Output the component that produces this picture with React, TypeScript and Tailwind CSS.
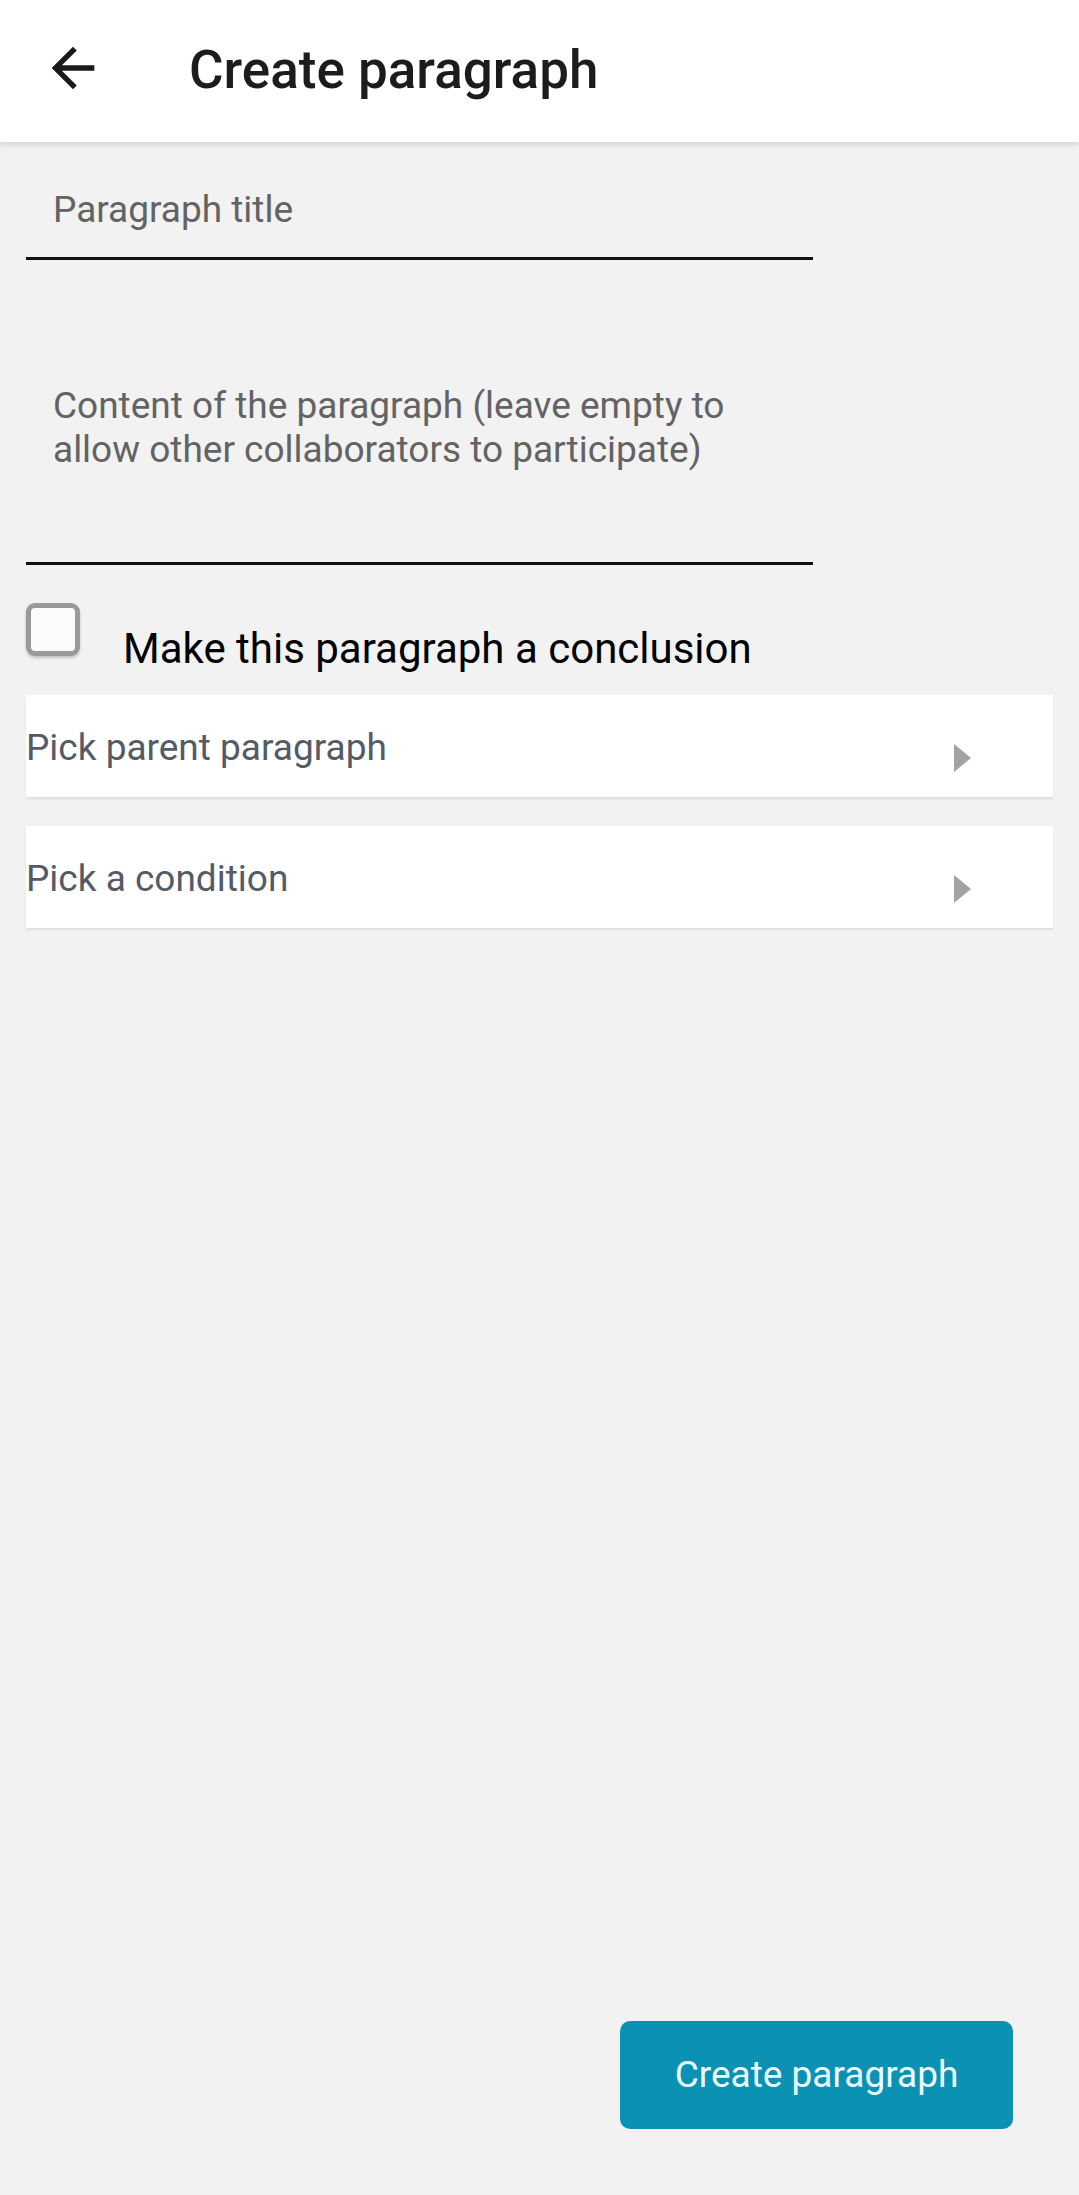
function PickRow({ label }: { label: string }) {
  return (
    <div className="flex h-[102px] items-start justify-between bg-white shadow-[0_2px_2px_rgba(0,0,0,0.08)]">
      <span className="mt-[32px] text-[37px] leading-[42px] text-[#545b66]">{label}</span>
      <svg className="mr-[82px] mt-[49px]" width="17" height="28" viewBox="0 0 17 28">
        <polygon points="0,0 17,14 0,28" fill="#a3a3a3" />
      </svg>
    </div>
  );
}

export default function App() {
  return (
    <div className="flex min-h-[2195px] flex-col bg-[#f2f2f2] font-['Roboto',sans-serif]">
      {/* Toolbar */}
      <div className="relative z-10 flex h-[142px] items-center bg-white shadow-[0_3px_5px_rgba(0,0,0,0.12)]">
        <svg className="mb-[6px] ml-[41px]" width="64" height="64" viewBox="0 0 24 24">
          <path d="M20 11H7.83l5.59-5.59L12 4l-8 8 8 8 1.41-1.41L7.83 13H20v-2z" fill="#1a1a1a" />
        </svg>
        <h1 className="ml-[84px] text-[53px] font-medium text-[#1c1c1c]">Create paragraph</h1>
      </div>

      {/* Form */}
      <div className="px-[26px]">
        <div className="w-[787px] border-b-[3px] border-[#111]">
          <div className="pb-[26px] pl-[27px] pt-[46px] text-[37px] leading-[43px] text-[#636363]">Paragraph title</div>
        </div>

        <div className="w-[787px] border-b-[3px] border-[#111]">
          <div className="pb-[91px] pl-[27px] pt-[124px] text-[37px] leading-[43.5px] text-[#636363]">
            Content of the paragraph (leave empty to
            <br />
            allow other collaborators to participate)
          </div>
        </div>

        <div className="mt-[38px] flex items-start">
          <div className="h-[53px] w-[54px] rounded-[9px] border-[5px] border-[#9a9a9a] bg-[#fbfbfb] shadow-[0_2px_3px_rgba(0,0,0,0.2)]" />
          <span className="ml-[43px] mt-[22px] text-[42px] leading-[47px] text-black">Make this paragraph a conclusion</span>
        </div>

        <div className="mt-[23px] flex flex-col gap-[29px]">
          <PickRow label="Pick parent paragraph" />
          <PickRow label="Pick a condition" />
        </div>
      </div>

      <div className="flex-1" />

      <div className="flex justify-end pb-[66px] pr-[66px]">
        <button className="h-[108px] w-[393px] rounded-[10px] bg-[#0b91b4] text-[37px] text-[#eafcff]">
          Create paragraph
        </button>
      </div>
    </div>
  );
}
